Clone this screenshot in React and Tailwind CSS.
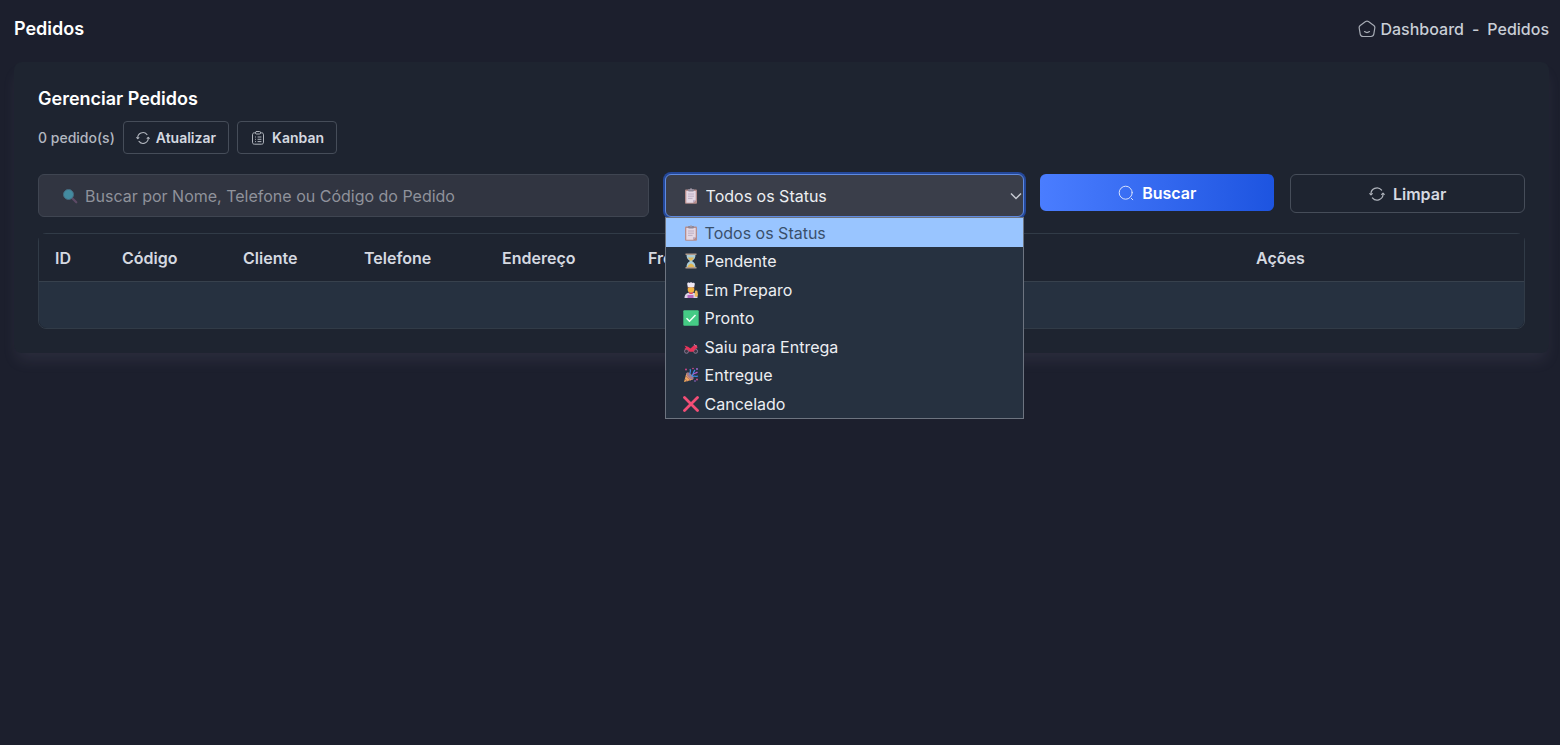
import { useState } from 'react'

const COLS = [
  { label: 'ID', cls: 'w-[67px]' },
  { label: 'Código', cls: 'w-[121px]' },
  { label: 'Cliente', cls: 'w-[121px]' },
  { label: 'Telefone', cls: 'w-[138px]' },
  { label: 'Endereço', cls: 'w-[146px]' },
  { label: 'Frete', cls: 'w-[608px]' },
  { label: 'Ações', cls: 'w-auto' },
]

const STATUS = [
  { value: 'all', label: 'Todos os Status', Icon: ClipboardEmoji },
  { value: 'pending', label: 'Pendente', Icon: HourglassEmoji },
  { value: 'preparing', label: 'Em Preparo', Icon: CookEmoji },
  { value: 'ready', label: 'Pronto', Icon: CheckEmoji },
  { value: 'delivering', label: 'Saiu para Entrega', Icon: ScooterEmoji },
  { value: 'delivered', label: 'Entregue', Icon: PartyEmoji },
  { value: 'canceled', label: 'Cancelado', Icon: CrossEmoji },
]

function ClipboardEmoji() {
  return (
    <svg viewBox="0 0 16 16" className="size-4 shrink-0" aria-hidden="true">
      <rect x="2" y="1.5" width="12" height="14.2" rx="1" fill="#b58d8c" />
      <path d="M3.3 3h9.400v9.200L10 14.700H3.300z" fill="#e4d8e4" />
      <path d="M12.700 12.200L10 14.700v-2.500z" fill="#b9a9c4" />
      <rect x="5" y="1" width="6" height="2.400" rx=".8" fill="#8f8797" />
      <circle cx="8" cy="1.300" r="1" fill="#a39aab" />
      <path d="M5 6h6M5 8.200h6M5 10.400h4.500" stroke="#b3a4bd" strokeWidth=".8" />
    </svg>
  )
}

function HourglassEmoji() {
  return (
    <svg viewBox="0 0 16 16" className="size-4 shrink-0" aria-hidden="true">
      <path d="M3.500 1.500h9c0 3.500-1 4.700-3.500 6.500 2.500 1.800 3.500 3 3.500 6.500h-9c0-3.500 1-4.700 3.500-6.500-2.500-1.800-3.500-3-3.500-6.500z" fill="#a9cbd6" />
      <path d="M5 4.500h6c-.5 1.500-1.500 2.300-3 3.500-1.500-1.200-2.500-2-3-3.500zM4.500 14c.5-2 2-3 3.500-3.500 1.500.5 3 1.500 3.500 3.500z" fill="#e3b653" />
      <path d="M2.500 1.300h11M2.500 14.700h11" stroke="#b09a8a" strokeWidth="1.500" />
    </svg>
  )
}

function CookEmoji() {
  return (
    <svg viewBox="0 0 16 16" className="size-4 shrink-0" aria-hidden="true">
      <path d="M1.500 16c0-4 2.500-5.500 6.500-5.500s6.500 1.500 6.500 5.500z" fill="#ddd3e8" />
      <path d="M4.500 16v-3h6v3z" fill="#b56ac0" />
      <circle cx="8" cy="7.500" r="3.300" fill="#f2b542" />
      <path d="M4.700 6.800C5 4.800 11 4.800 11.300 6.800l.2-1.800h-7z" fill="#93502e" />
      <path d="M4.800 5.200L4.200 2c0-1.500 1.800-1.700 2.300-1C7 0 9 0 9.500 1c.7-.7 2.400-.3 2.300 1l-.6 3.200z" fill="#f0e9f5" />
      <path d="M6 9.800l2 1.200 2-1.200-.4 2.200H6.400z" fill="#e8455c" />
      <path d="M11.800 14.500V9.800c0-.8.600-1.300 1.400-1.300s1.300.5 1.300 1.300l.5 3.200-1 2z" fill="#eeb758" />
    </svg>
  )
}

function CheckEmoji() {
  return (
    <svg viewBox="0 0 16 16" className="size-4 shrink-0" aria-hidden="true">
      <rect x=".3" y=".3" width="15.400" height="15.400" rx="1" fill="#45cb85" />
      <path d="M3.500 8.300l3 3 6-6.300" fill="none" stroke="#f2fff8" strokeWidth="1.500" />
    </svg>
  )
}

function ScooterEmoji() {
  return (
    <svg viewBox="0 0 16 16" className="size-4 shrink-0" aria-hidden="true">
      <circle cx="3.500" cy="12.300" r="2" fill="#3d3444" stroke="#8c7f98" strokeWidth=".9" />
      <circle cx="12.600" cy="12.300" r="2" fill="#3d3444" stroke="#8c7f98" strokeWidth=".9" />
      <path d="M1.500 6.500l3.500 1.200 2.500 1.800L11 6.300l2.800-.3.700 3-2.500 1.200-1.500 2.600h-4L4.500 10.500 1 10.200l2-1.400z" fill="#e8345a" />
      <path d="M11 5l2 2.500" stroke="#a99bb5" strokeWidth=".9" />
    </svg>
  )
}

function PartyEmoji() {
  return (
    <svg viewBox="0 0 16 16" className="size-4 shrink-0" aria-hidden="true">
      <path d="M1 15L3.500 6l6.500 6.500z" fill="#f0a95a" />
      <path d="M2.800 9l5 4.500M2 12l2.500 2.200" stroke="#b06a72" strokeWidth=".9" />
      <ellipse cx="7" cy="9" rx="4.600" ry="2" transform="rotate(45 7 9)" fill="#a27a8c" />
      <path d="M7 8c-1-2 1.500-3 0-6M8.500 9c2-1 1.500-4 3.500-6M9.500 9.500c2-1 3 .5 5.500-.5" fill="none" stroke="#3f8fe8" strokeWidth="1.200" />
      <path d="M10 7.500c1-1.500 3-1 4.500-2.500" fill="none" stroke="#b85ad0" strokeWidth="1.200" />
      <g fill="#e0498f"><circle cx="3" cy="2.500" r=".9" /><circle cx="14" cy="12.500" r=".9" /><circle cx="10" cy="1.500" r=".8" /></g>
      <g fill="#a26be0"><circle cx="14" cy="2" r=".9" /><circle cx="12" cy="14" r=".8" /></g>
    </svg>
  )
}

function CrossEmoji() {
  return (
    <svg viewBox="0 0 16 16" className="size-4 shrink-0" aria-hidden="true">
      <path d="M1.500 1.500l13 13M14.500 1.500l-13 13" stroke="#f34e76" strokeWidth="2.800" strokeLinecap="round" />
    </svg>
  )
}

function LensEmoji() {
  return (
    <svg viewBox="0 0 16 16" className="size-4 shrink-0" aria-hidden="true">
      <path d="M10 10l4.300 4.300" stroke="#5d4a66" strokeWidth="2.200" strokeLinecap="round" />
      <circle cx="6.500" cy="6.500" r="5" fill="#438ba0" stroke="#456b80" strokeWidth="1" />
    </svg>
  )
}

function HomeIcon() {
  return (
    <svg viewBox="0 0 18 18" className="size-[18px] opacity-80" fill="none" stroke="currentColor" strokeWidth="1.200" strokeLinecap="round" strokeLinejoin="round" aria-hidden="true">
      <path d="M7.600 1.600 2.200 5.500C1.400 6.100 1 7 1.200 8l1 6.200C2.500 15.900 3.500 16.500 5 16.500h8c1.500 0 2.500-.6 2.800-2.300l1-6.200c.2-1-.2-1.900-1-2.500l-5.400-3.900c-.9-.6-1.900-.6-2.800 0z" />
      <path d="M6.500 11.600c1.500 1.100 3.500 1.100 5 0" />
    </svg>
  )
}

function RefreshIcon({ className }) {
  return (
    <svg viewBox="0 0 16 16" className={className} fill="none" stroke="currentColor" strokeWidth="1.200" strokeLinecap="round" strokeLinejoin="round" aria-hidden="true">
      <path d="M2 8.500A6 6 0 0 1 12.600 4.100M14 7.500A6 6 0 0 1 3.400 11.900" />
      <path d="M.8 7.600l1.200 1.200 1.300-1.200M12.700 8.400l1.300-1.200 1.200 1.200" />
    </svg>
  )
}

function BoardIcon() {
  return (
    <svg viewBox="0 0 16 16" className="size-4 opacity-80" fill="none" stroke="currentColor" strokeLinecap="round" strokeLinejoin="round" aria-hidden="true">
      <path d="M5.500 2.800H4.500c-1.300 0-2 .7-2 2v7.400c0 1.300.7 2 2 2h7c1.300 0 2-.7 2-2V4.800c0-1.300-.7-2-2-2h-1" />
      <rect x="5.500" y="1.500" width="5" height="2.500" rx="1" />
      <path d="M8 7h3M8 9.300h3M8 11.600h3M5.500 7h.1M5.500 9.300h.1M5.500 11.600h.1" />
    </svg>
  )
}

function SearchIcon() {
  return (
    <svg viewBox="0 0 16 16" className="size-4 opacity-80" fill="none" stroke="currentColor" strokeLinecap="round" aria-hidden="true">
      <circle cx="7.700" cy="7.700" r="6.500" />
      <path d="M13.300 13.300l1.500 1.500" />
    </svg>
  )
}

export default function App() {
  const [status, setStatus] = useState('all')
  const [query, setQuery] = useState('')
  const current = STATUS.find(s => s.value === status)

  return (
    <div className="min-h-screen bg-[#1c1f2d] pr-[11px] pl-3.5 font-['Inter',sans-serif] text-base text-[#d5d9e0]">
      <header className="flex h-[62px] items-center justify-between pb-1">
        <h1 className="text-lg font-semibold text-white">Pedidos</h1>
        <nav className="flex items-center gap-2 font-medium text-[#c9ced6]">
          <a href="#dashboard" className="flex items-center gap-1"><HomeIcon />Dashboard</a>
          <span>-</span>
          <span>Pedidos</span>
        </nav>
      </header>

      <main className="rounded-lg bg-[#1e2430] px-6 pt-[25px] pb-6 shadow-[0_10px_15px_-3px_rgba(160,150,180,0.12)]">
        <h2 className="text-lg leading-6 font-semibold text-white">Gerenciar Pedidos</h2>
        <div className="mt-2.5 flex items-center gap-2 text-sm">
          <span className="font-medium text-[#b3b8c0]">0 pedido(s)</span>
          <button className="flex h-[33px] items-center gap-1.5 rounded border border-[#464d59] px-3 font-semibold">
            <RefreshIcon className="size-3.5 opacity-80" />Atualizar
          </button>
          <button className="flex h-[33px] items-center gap-1.5 rounded border border-[#464d59] px-3 font-semibold">
            <BoardIcon />Kanban
          </button>
        </div>

        <div className="mt-5 grid grid-cols-[611fr_360fr_234fr_235fr] items-start gap-4">
          <div className="relative">
            <span className="absolute top-3.5 left-6"><LensEmoji /></span>
            <input
              aria-label="Buscar pedido"
              value={query}
              onChange={e => setQuery(e.target.value)}
              placeholder="Buscar por Nome, Telefone ou Código do Pedido"
              className="h-[43px] w-full rounded-md border border-[#3f4551] bg-[#313541] pr-4 pl-[46px] placeholder:text-[#8f929b]"
            />
          </div>
          <div className="relative">
            <span className="absolute top-3.5 left-[18px]"><current.Icon /></span>
            <select
              aria-label="Status do pedido"
              value={status}
              onChange={e => setStatus(e.target.value)}
              className="h-[43px] w-full appearance-none rounded-md border border-[#5f8ae0] bg-[#3a3e4a] pl-10 text-[#eceef2] ring-2 ring-[#24489a] outline-none"
            >
              {STATUS.map(s => <option key={s.value} value={s.value}>{s.label}</option>)}
            </select>
            <svg viewBox="0 0 12 8" className="pointer-events-none absolute top-[18px] right-0.5 h-2 w-3" fill="none" stroke="#c5c9d0" strokeWidth="1.500" aria-hidden="true">
              <path d="M1 1.500l5 5 5-5" />
            </svg>
            <ul role="listbox" aria-label="Opções de status" className="absolute top-[43px] left-0 z-10 w-full border border-[#6d7480] bg-[#263140] text-[#eceef2]">
              {STATUS.map(({ value, label, Icon }, i) => (
                <li
                  key={value}
                  role="option"
                  aria-selected={value === status}
                  onClick={() => setStatus(value)}
                  className={`flex items-center gap-1.5 pl-[17px] ${i % 2 ? 'h-7' : 'h-[29px]'} ${value === status ? 'bg-[#99c5ff] text-[#39506b]' : ''}`}
                >
                  <Icon />{label}
                </li>
              ))}
            </ul>
          </div>
          <button className="flex h-[37px] items-center justify-center gap-2 rounded-md bg-linear-to-r from-[#4a7dff] to-[#1d54e0] font-semibold text-white">
            <SearchIcon />Buscar
          </button>
          <button className="flex h-[39px] items-center justify-center gap-2 rounded-md border border-[#464d59] font-semibold">
            <RefreshIcon className="size-4 opacity-80" />Limpar
          </button>
        </div>

        <div className="mt-4 rounded-lg border border-[#313b47]">
          <table className="w-full table-fixed border-separate border-spacing-0 text-left">
            <thead>
              <tr className="h-12">
                {COLS.map(c => (
                  <th key={c.label} className={`border-b border-[#37414d] bg-[#1e2430] pl-4 font-semibold ${c.cls}`}>{c.label}</th>
                ))}
              </tr>
            </thead>
            <tbody>
              <tr className="h-[46px]"><td colSpan={COLS.length} className="rounded-b-lg bg-[#263140]" /></tr>
            </tbody>
          </table>
        </div>
      </main>
    </div>
  )
}
